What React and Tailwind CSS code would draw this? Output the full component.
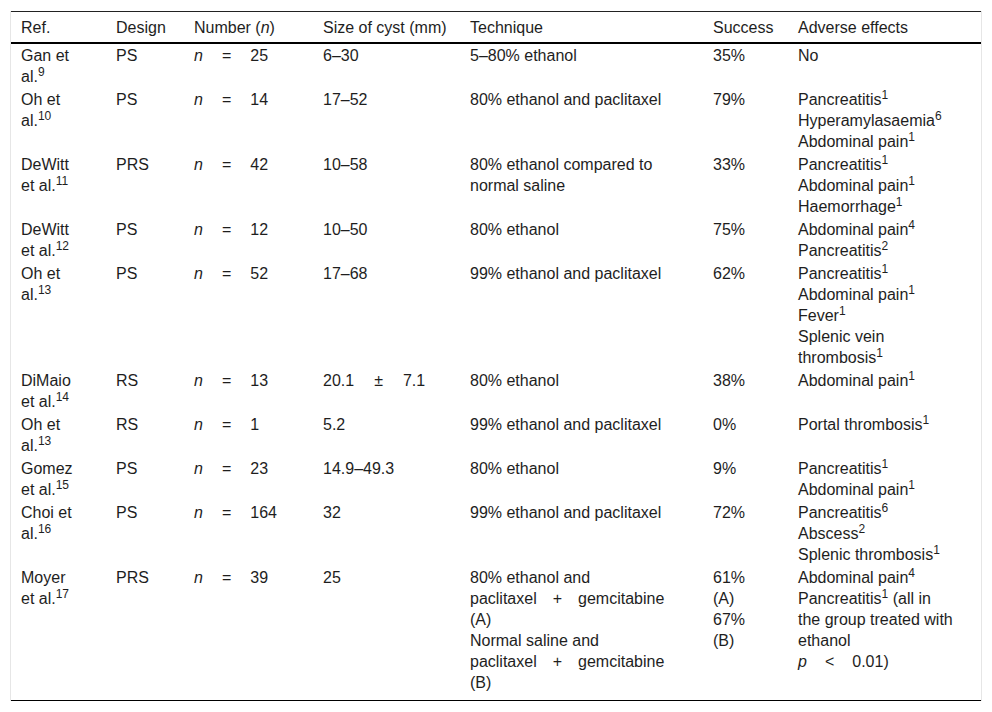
import React from 'react';

const Rel = ({ left, op, right, gap = 'mx-[19px]' }) => (
  <span className="whitespace-nowrap">
    {left}
    <span className={gap}>{op}</span>
    {right}
  </span>
);

const N = ({ value }) => <Rel left={<i>n</i>} op="=" right={value} />;

const Item = ({ text, sup, children }) => (
  <div>
    {text}
    {sup && <sup>{sup}</sup>}
    {children}
  </div>
);

const PlusGem = () => <Rel left="paclitaxel" op="+" right="gemcitabine" gap="mx-[16px]" />;

const rows = [
  {
    ref: ['Gan et al.', '9'],
    design: 'PS',
    n: '25',
    size: '6–30',
    tech: ['5–80% ethanol'],
    success: ['35%'],
    adverse: [['No']],
  },
  {
    ref: ['Oh et al.', '10'],
    design: 'PS',
    n: '14',
    size: '17–52',
    tech: ['80% ethanol and paclitaxel'],
    success: ['79%'],
    adverse: [['Pancreatitis', '1'], ['Hyperamylasaemia', '6'], ['Abdominal pain', '1']],
  },
  {
    ref: ['DeWitt et al.', '11'],
    design: 'PRS',
    n: '42',
    size: '10–58',
    tech: ['80% ethanol compared to normal saline'],
    success: ['33%'],
    adverse: [['Pancreatitis', '1'], ['Abdominal pain', '1'], ['Haemorrhage', '1']],
  },
  {
    ref: ['DeWitt et al.', '12'],
    design: 'PS',
    n: '12',
    size: '10–50',
    tech: ['80% ethanol'],
    success: ['75%'],
    adverse: [['Abdominal pain', '4'], ['Pancreatitis', '2']],
  },
  {
    ref: ['Oh et al.', '13'],
    design: 'PS',
    n: '52',
    size: '17–68',
    tech: ['99% ethanol and paclitaxel'],
    success: ['62%'],
    adverse: [['Pancreatitis', '1'], ['Abdominal pain', '1'], ['Fever', '1'], ['Splenic vein thrombosis', '1']],
  },
  {
    ref: ['DiMaio et al.', '14'],
    design: 'RS',
    n: '13',
    size: <Rel left="20.1" op="±" right="7.1" gap="mx-[20px]" />,
    tech: ['80% ethanol'],
    success: ['38%'],
    adverse: [['Abdominal pain', '1']],
  },
  {
    ref: ['Oh et al.', '13'],
    design: 'RS',
    n: '1',
    size: '5.2',
    tech: ['99% ethanol and paclitaxel'],
    success: ['0%'],
    adverse: [['Portal thrombosis', '1']],
  },
  {
    ref: ['Gomez et al.', '15'],
    design: 'PS',
    n: '23',
    size: '14.9–49.3',
    tech: ['80% ethanol'],
    success: ['9%'],
    adverse: [['Pancreatitis', '1'], ['Abdominal pain', '1']],
  },
  {
    ref: ['Choi et al.', '16'],
    design: 'PS',
    n: '164',
    size: '32',
    tech: ['99% ethanol and paclitaxel'],
    success: ['72%'],
    adverse: [['Pancreatitis', '6'], ['Abscess', '2'], ['Splenic thrombosis', '1']],
  },
  {
    ref: ['Moyer et al.', '17'],
    design: 'PRS',
    n: '39',
    size: '25',
    tech: [
      <>80% ethanol and <PlusGem /> (A)</>,
      <>Normal saline and <PlusGem /> (B)</>,
    ],
    success: ['61% (A)', '67% (B)'],
    adverse: [
      ['Abdominal pain', '4'],
      ['Pancreatitis', '1', ' (all in the group treated with ethanol'],
      [<Rel left={<i>p</i>} op="<" right="0.01)" gap="mx-[18px]" />],
    ],
  },
];

const td = 'pl-[10px] pr-[26px] py-[1px] align-top text-left';
const th = 'pl-[10px] pr-[10px] pt-[5px] pb-[4px] align-top text-left font-normal border-t border-t-[#222] border-b-2 border-b-black';

export default function App() {
  return (
    <div
      className="min-h-screen bg-white pt-[11px] text-[16px] leading-[21px] text-[#1e1e1e]"
      style={{ fontFamily: '"Liberation Sans", Arial, sans-serif' }}
    >
      <div className="ml-[10px] w-[972px] border-x border-[#e6e6e6]">
        <table className="w-[970px] table-fixed border-collapse">
          <colgroup>
            <col className="w-[95px]" />
            <col className="w-[78px]" />
            <col className="w-[129px]" />
            <col className="w-[147px]" />
            <col className="w-[243px]" />
            <col className="w-[85px]" />
            <col className="w-[193px]" />
          </colgroup>
          <thead>
            <tr>
              <th className={th}>Ref.</th>
              <th className={th}>Design</th>
              <th className={th}>
                Number (<i>n</i>)
              </th>
              <th className={th}>Size of cyst (mm)</th>
              <th className={th}>Technique</th>
              <th className={th}>Success</th>
              <th className={th}>Adverse effects</th>
            </tr>
          </thead>
          <tbody>
            {rows.map((r, i) => {
              const last = i === rows.length - 1;
              const cell = last ? `${td} pb-[7px] border-b border-black` : td;
              return (
                <tr key={i}>
                  <td className={`${cell} pr-[28px]`}>
                    {r.ref[0]}
                    <sup>{r.ref[1]}</sup>
                  </td>
                  <td className={cell}>{r.design}</td>
                  <td className={cell}>
                    <N value={r.n} />
                  </td>
                  <td className={`${cell} pr-[10px]`}>{r.size}</td>
                  <td className={cell}>
                    {r.tech.map((t, j) => (
                      <div key={j}>{t}</div>
                    ))}
                  </td>
                  <td className={cell}>
                    {r.success.map((s, j) => (
                      <div key={j}>{s}</div>
                    ))}
                  </td>
                  <td className={cell}>
                    {r.adverse.map(([text, sup, rest], j) => (
                      <Item key={j} text={text} sup={sup}>
                        {rest}
                      </Item>
                    ))}
                  </td>
                </tr>
              );
            })}
          </tbody>
        </table>
      </div>
    </div>
  );
}
